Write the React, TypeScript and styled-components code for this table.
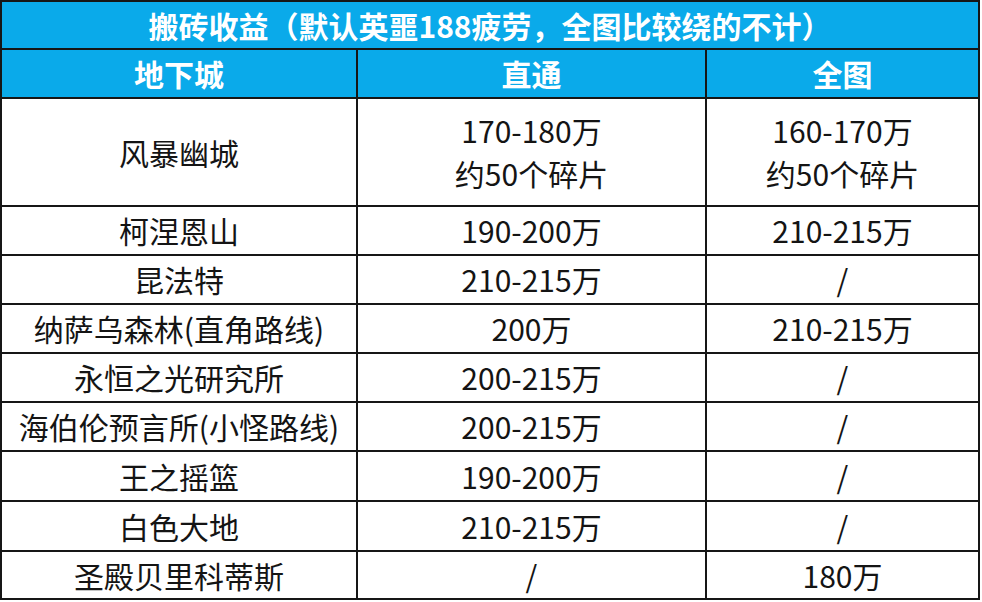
import styled, { createGlobalStyle } from 'styled-components'

const GlobalStyle = createGlobalStyle`
    html, body {
        margin: 0;
        padding: 0;
        background: #ffffff;
    }
    body {
        font-family: "Noto Sans CJK SC", "Noto Sans", sans-serif;
    }
`

const Sheet = styled.div`
    display: grid;
    grid-template-columns: 354px 347px 271px;
    grid-template-rows: 46px 47px 106px 47px 47px 47px 47px 47px 48px 48px 46px;
    gap: 2px;
    padding: 2px;
    width: 980px;
    box-sizing: border-box;
    background: #161616;
`

const Cell = styled.div<{ $head?: boolean }>`
    display: flex;
    flex-direction: column;
    align-items: center;
    justify-content: center;
    background: ${p => p.$head ? '#0aaaea' : '#ffffff'};
    color: ${p => p.$head ? '#ffffff' : '#141414'};
    font-size: 30px;
    font-weight: ${p => p.$head ? 700 : 400};
    line-height: 43px;
    white-space: nowrap;
`

const Title = styled(Cell)`
    grid-column: 1 / -1;
`

const rows: string[][] = [
    ['风暴幽城', '170-180万\n约50个碎片', '160-170万\n约50个碎片'],
    ['柯涅恩山', '190-200万', '210-215万'],
    ['昆法特', '210-215万', '/'],
    ['纳萨乌森林(直角路线)', '200万', '210-215万'],
    ['永恒之光研究所', '200-215万', '/'],
    ['海伯伦预言所(小怪路线)', '200-215万', '/'],
    ['王之摇篮', '190-200万', '/'],
    ['白色大地', '210-215万', '/'],
    ['圣殿贝里科蒂斯', '/', '180万'],
]

const App: React.FC = () => {
    return (
        <>
            <GlobalStyle />
            <Sheet>
                <Title $head>搬砖收益（默认英噩188疲劳，全图比较绕的不计）</Title>
                <Cell $head>地下城</Cell>
                <Cell $head>直通</Cell>
                <Cell $head>全图</Cell>
                {rows.map((row, i) =>
                    row.map((text, j) => (
                        <Cell key={`${i}-${j}`}>
                            {text.split('\n').map(line => <span key={line}>{line}</span>)}
                        </Cell>
                    ))
                )}
            </Sheet>
        </>
    )
}

export default App
